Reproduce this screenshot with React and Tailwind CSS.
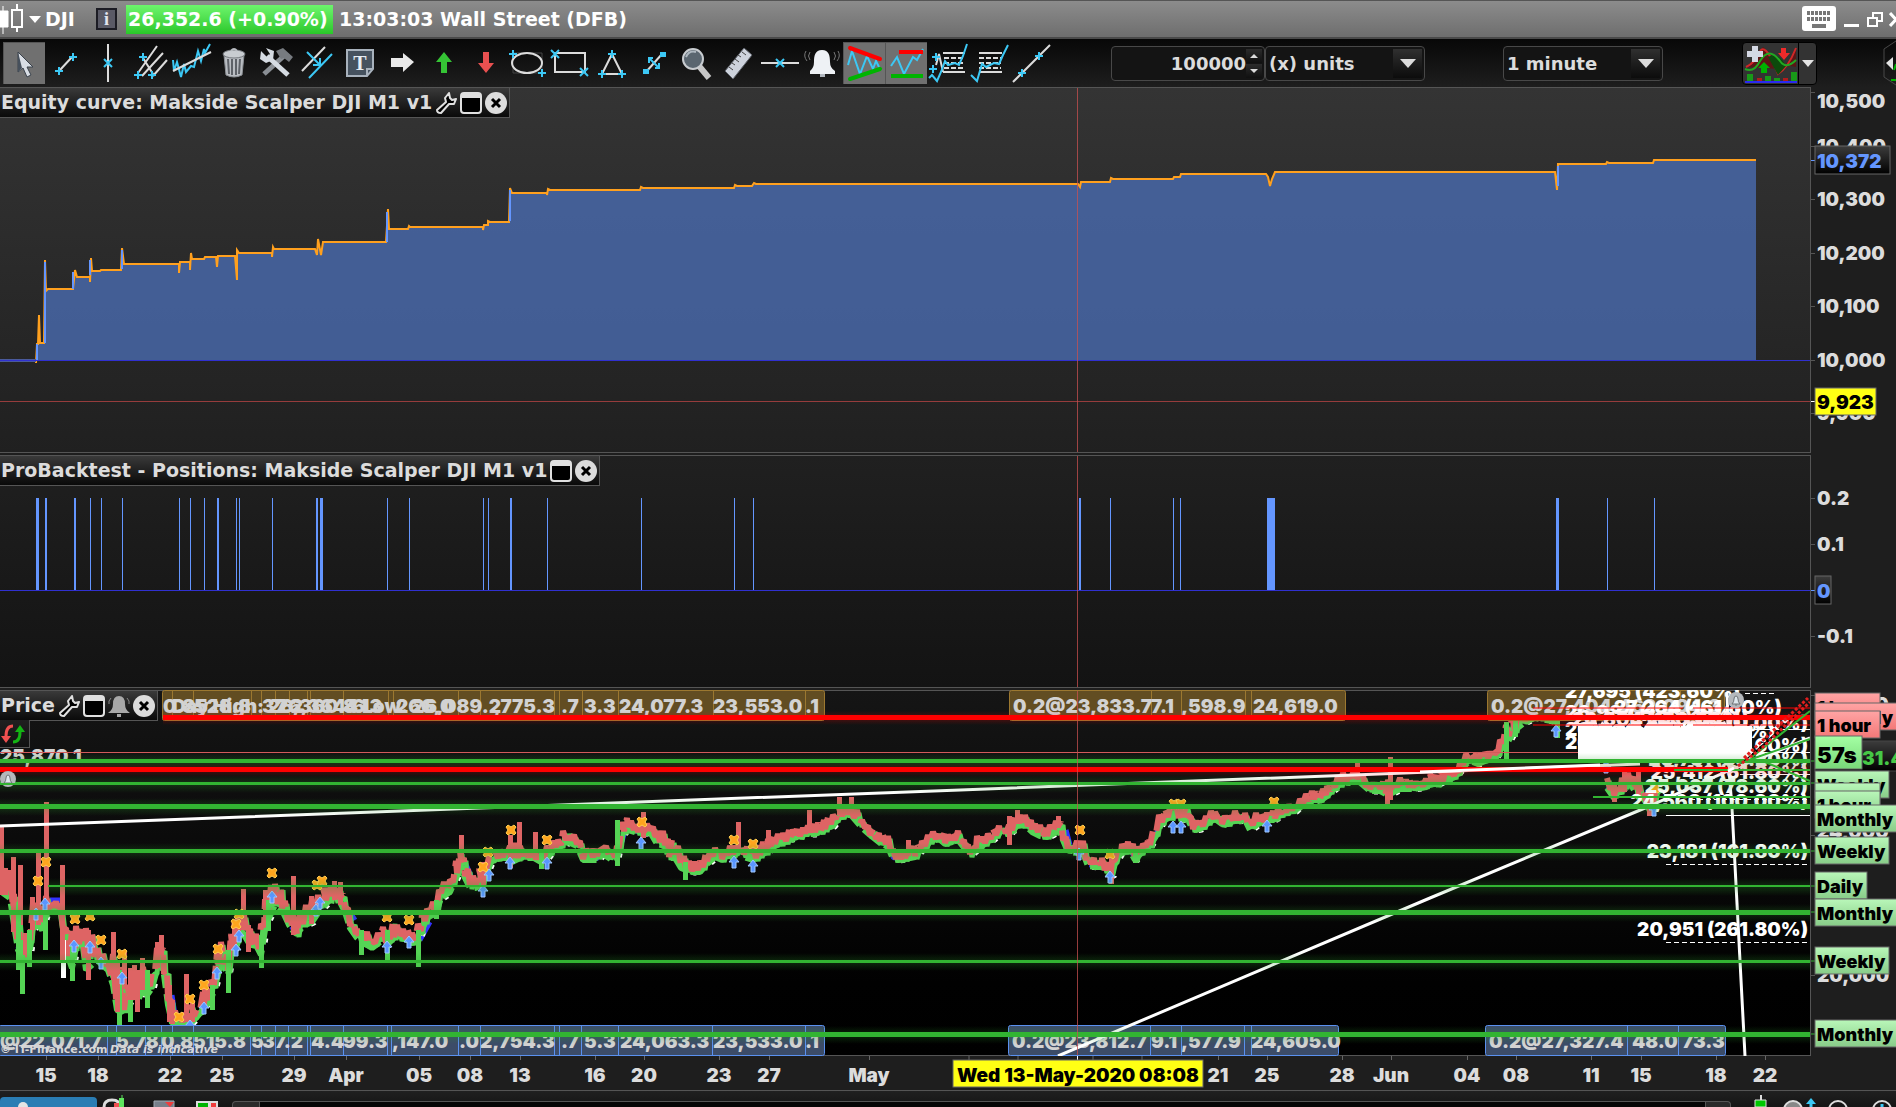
import { Fragment } from "react";

const UI_FONT = "font-['DejaVu_Sans',sans-serif] font-bold";
const CHART_FONT = "font-['Inter',sans-serif] font-black";

// equity line, x / y
const equity = [
  [0, 360], [36, 360], [36, 363], [37, 344], [38, 344], [39, 315], [40, 343], [44, 343], [45, 260], [46, 291], [48, 289],
  [73, 289], [75, 270], [77, 277], [90, 277], [90, 282], [91, 258], [92, 271], [100, 271], [101, 270], [121, 270],
  [122, 248], [124, 264], [179, 264], [179, 273], [180, 262], [190, 262], [190, 270], [191, 253], [192, 259],
  [204, 259], [205, 257], [216, 257], [217, 267], [218, 256], [235, 256], [237, 280], [237, 250], [239, 253],
  [272, 253], [272, 257], [273, 247], [274, 249], [315, 249], [317, 255], [318, 239], [321, 255], [323, 242],
  [386, 242], [388, 209], [389, 229], [408, 229], [409, 226], [410, 227], [483, 227], [483, 230], [484, 225],
  [488, 225], [488, 221], [490, 222], [509, 222], [510, 188], [512, 193], [547, 193], [547, 195], [548, 189], [550, 190],
  [640, 190], [641, 187], [643, 188], [734, 188], [735, 185], [737, 186], [752, 186], [754, 183], [756, 184],
  [1078, 184], [1080, 187], [1081, 182], [1110, 182], [1111, 178], [1113, 179], [1173, 179], [1174, 177],
  [1180, 177], [1181, 174], [1266, 174], [1268, 177], [1270, 186], [1272, 179], [1275, 172], [1555, 172],
  [1557, 190], [1558, 164], [1560, 164], [1606, 164], [1607, 162], [1609, 163], [1653, 163], [1654, 160], [1756, 160],
];

const positions = [
  [37, 3], [46, 2], [75, 2], [90, 1], [101, 1], [122, 1], [179, 1], [190, 1], [204, 1], [218, 2], [236, 1], [239, 1],
  [272, 1], [317, 2], [321, 3], [387, 1], [409, 1], [483, 1], [488, 1], [511, 2], [547, 1], [641, 1], [734, 1],
  [753, 1], [1080, 2], [1110, 1], [1173, 1], [1180, 1], [1271, 8], [1557, 3], [1607, 1], [1654, 1],
];

// price envelope: x, high, low
const price = [
  [0, 866, 888], [3, 868, 893], [10, 872, 898], [14, 885, 925], [18, 910, 950], [22, 930, 958], [27, 935, 960], [30, 915, 950],
  [33, 900, 928], [38, 900, 925], [42, 905, 930], [46, 895, 915], [50, 902, 908], [60, 903, 908], [66, 925, 950], [72, 930, 968],
  [76, 926, 948], [82, 930, 940], [86, 922, 970], [92, 928, 965], [97, 945, 960], [102, 952, 965], [108, 962, 970],
  [113, 955, 985], [117, 975, 1010], [121, 955, 1012], [127, 985, 1008], [132, 970, 995], [138, 968, 1000], [143, 960, 990],
  [147, 975, 995], [152, 972, 988], [157, 945, 970], [160, 937, 958], [164, 948, 975], [168, 970, 1005], [172, 1005, 1023],
  [182, 1018, 1023], [191, 1005, 1023], [197, 1008, 1017], [204, 988, 1008], [211, 980, 1000], [218, 948, 975],
  [221, 940, 960], [228, 955, 975], [232, 922, 952], [237, 908, 945], [241, 908, 930], [250, 925, 945], [256, 932, 945],
  [261, 925, 955], [265, 895, 930], [268, 885, 920], [275, 882, 905], [282, 888, 910], [289, 910, 925], [294, 915, 932],
  [297, 915, 934], [303, 908, 926], [312, 898, 922], [320, 888, 910], [330, 884, 900], [340, 884, 902], [345, 895, 912],
  [350, 917, 928], [357, 928, 938], [361, 928, 942], [367, 932, 945], [372, 940, 948], [380, 928, 942], [387, 925, 945],
  [394, 920, 938], [400, 928, 938], [408, 928, 940], [412, 932, 943], [418, 922, 942], [422, 910, 930], [427, 907, 918],
  [436, 900, 913], [441, 880, 898], [450, 878, 892], [457, 858, 876], [461, 848, 866], [465, 855, 878], [470, 877, 888],
  [476, 870, 888], [482, 865, 882], [486, 857, 874], [492, 852, 860], [500, 849, 858], [507, 844, 858], [512, 840, 862],
  [520, 845, 858], [525, 850, 857], [532, 850, 857], [541, 850, 862], [547, 846, 858], [553, 840, 850], [558, 840, 847],
  [563, 832, 846], [568, 832, 842], [577, 835, 846], [583, 846, 860], [590, 847, 860], [597, 846, 860], [603, 844, 854],
  [612, 849, 860], [617, 845, 858], [619, 822, 848], [624, 820, 832], [628, 818, 830], [635, 822, 832], [641, 822, 834],
  [650, 824, 832], [657, 830, 844], [665, 832, 846], [669, 838, 858], [675, 842, 858], [681, 850, 868], [686, 860, 870],
  [692, 862, 872], [700, 858, 872], [707, 852, 864], [715, 848, 857], [722, 850, 860], [730, 846, 857], [738, 844, 852],
  [744, 846, 857], [753, 847, 860], [760, 844, 856], [768, 838, 851], [775, 835, 846], [783, 832, 842], [790, 829, 839],
  [797, 828, 837], [805, 827, 834], [815, 824, 834], [825, 819, 829], [833, 814, 826], [839, 808, 818], [845, 807, 815],
  [851, 807, 815], [857, 810, 822], [862, 820, 828], [870, 827, 835], [880, 834, 843], [888, 836, 847], [893, 849, 859],
  [898, 850, 860], [905, 850, 859], [915, 847, 857], [922, 840, 849], [930, 832, 842], [938, 830, 838], [945, 834, 844],
  [952, 832, 842], [958, 832, 840], [965, 840, 849], [970, 847, 855], [977, 837, 849], [985, 834, 844], [993, 830, 839],
  [1000, 826, 832], [1009, 824, 834], [1017, 813, 826], [1025, 814, 825], [1032, 822, 832], [1040, 824, 836], [1047, 828, 837],
  [1053, 822, 834], [1058, 820, 828], [1063, 824, 840], [1068, 842, 852], [1077, 840, 853], [1083, 840, 853], [1088, 856, 866],
  [1095, 857, 867], [1102, 857, 867], [1108, 862, 874], [1112, 856, 876], [1115, 847, 863], [1122, 845, 851], [1130, 842, 851],
  [1135, 847, 860], [1143, 842, 851], [1150, 837, 846], [1156, 822, 836], [1162, 810, 822], [1170, 805, 817], [1180, 805, 819],
  [1188, 807, 820], [1193, 820, 830], [1200, 822, 829], [1208, 814, 823], [1215, 810, 819], [1222, 814, 824], [1230, 816, 824],
  [1235, 812, 821], [1245, 812, 820], [1250, 820, 830], [1258, 812, 824], [1267, 813, 821], [1275, 810, 819], [1283, 807, 813],
  [1295, 803, 811], [1300, 799, 806], [1309, 792, 802], [1314, 790, 799], [1320, 792, 801], [1327, 786, 796], [1332, 782, 791],
  [1340, 774, 784], [1350, 774, 782], [1357, 772, 780], [1363, 775, 785], [1370, 783, 791], [1380, 783, 791], [1388, 778, 795],
  [1400, 778, 789], [1410, 781, 789], [1420, 781, 788], [1430, 775, 786], [1437, 773, 784], [1445, 771, 781], [1455, 769, 777],
  [1463, 755, 767], [1470, 754, 761], [1478, 755, 764], [1485, 751, 761], [1495, 752, 758], [1500, 740, 750], [1506, 725, 745],
  [1515, 712, 730], [1525, 703, 722], [1535, 702, 718], [1557, 702, 722],
];
const priceEnd = [
  [1607, 776, 788], [1614, 788, 798], [1622, 778, 789], [1630, 772, 783], [1638, 782, 797], [1644, 790, 799],
  [1650, 792, 811], [1656, 788, 797], [1662, 775, 789],
];

// x, y1, y2, colour index (0 red, 1 green, 2 white)
const spikes = [
  [1, 825, 895, 0], [5, 868, 895, 0], [9, 870, 890, 0], [13, 857, 932, 0], [20, 865, 925, 0], [18, 910, 970, 1],
  [22, 940, 994, 1], [25, 933, 955, 0], [29, 930, 967, 1], [32, 897, 930, 0],
  [38, 853, 925, 0], [45, 915, 950, 1], [46, 802, 910, 0], [63, 940, 978, 2], [62, 865, 960, 0], [72, 945, 981, 1],
  [88, 930, 980, 0], [113, 932, 980, 0], [119, 970, 1025, 1], [117, 960, 1012, 0], [124, 950, 985, 0], [130, 985, 1022, 1],
  [130, 968, 1000, 0], [134, 965, 1000, 0], [137, 970, 1012, 0], [142, 958, 990, 0], [147, 970, 1008, 1],
  [157, 942, 968, 0], [161, 935, 955, 0], [169, 985, 1022, 0], [172, 1000, 1024, 0], [192, 1000, 1022, 0],
  [186, 974, 1022, 0], [204, 985, 1005, 0], [212, 985, 1010, 1], [228, 950, 993, 1], [234, 920, 948, 0], [243, 889, 930, 0],
  [248, 925, 952, 0], [261, 935, 968, 1], [265, 890, 925, 0], [268, 900, 931, 1], [293, 876, 935, 0], [311, 896, 924, 0],
  [334, 881, 900, 0], [340, 882, 905, 0], [361, 930, 955, 1], [387, 930, 960, 1], [418, 930, 967, 1], [436, 900, 919, 1],
  [461, 835, 860, 0], [483, 862, 885, 0], [510, 835, 868, 0], [519, 822, 855, 0], [535, 832, 860, 0], [541, 852, 869, 1],
  [617, 820, 866, 1], [643, 812, 838, 0], [685, 862, 880, 1], [738, 822, 850, 0], [768, 830, 848, 0], [809, 810, 832, 0],
  [839, 797, 815, 0], [851, 797, 815, 0], [908, 840, 856, 0], [1009, 816, 845, 0], [1058, 816, 828, 0], [1111, 852, 884, 0],
  [1017, 810, 820, 0], [1357, 763, 780, 0], [1390, 757, 800, 0], [1387, 785, 809, 0], [1135, 850, 863, 1], [1506, 722, 759, 1],
  [1557, 705, 738, 1], [1515, 715, 737, 1], [1649, 795, 816, 0], [1614, 785, 802, 0], [1624, 770, 792, 0], [1638, 772, 796, 0],
];
const spikeColors = ["#de6464", "#55d455", "#ffffff"];

const crosses = [
  [38, 881], [46, 862], [75, 919], [90, 916], [101, 940], [122, 954], [179, 1017], [190, 999], [204, 985], [218, 949],
  [236, 924], [239, 914], [272, 873], [317, 885], [322, 881], [387, 917], [409, 920], [483, 867], [488, 852], [511, 830],
  [547, 840], [642, 822], [734, 840], [753, 844], [1080, 830], [1110, 854], [1174, 804], [1181, 804], [1274, 802], [1655, 788],
];
const arrows = [
  [36, 914], [45, 904], [74, 946], [90, 947], [101, 963], [122, 978], [190, 1026], [204, 1008], [217, 973], [236, 950],
  [239, 936], [272, 897], [316, 910], [320, 903], [387, 947], [409, 942], [483, 891], [489, 875], [510, 863], [547, 863],
  [641, 843], [734, 862], [753, 866], [1079, 854], [1110, 877], [1173, 827], [1181, 827], [1267, 826], [1556, 731],
  [1606, 767], [1654, 810],
];

const greenLines = [
  [0, 761, 4], [0, 783, 3], [0, 806, 5], [0, 851, 4], [48, 886, 2], [0, 912, 5], [0, 961, 3], [0, 1034, 5],
];

const topSplits = [172, 193, 251, 261, 275, 289, 307, 310, 343, 388, 393, 458, 480, 554, 559, 582, 618, 713, 805];
const botSplits = [107, 116, 145, 161, 172, 193, 250, 261, 275, 288, 307, 310, 343, 387, 391, 458, 480, 554, 559, 581, 618, 712, 805];

const topTexts = [
  [163, "0.85"], [172, "Day High: 26,360.4"], [194, "528.8"], [262, "37.2"], [276, "26,364.6"], [343, "8.13"],
  [362, "Low: 26,089.2"], [396, "266,0"], [494, ",775.3"], [561, ".7"], [584, "3.3"], [619, "24,077.3"], [713, "23,553.0"], [805, ".1"],
  [1013, "0.2@23,833.7"], [1151, "7.1"], [1181, ",598.9"], [1253, "24,619.0"], [1491, "0.2@27,404.4"], [1631, "62,094.3"],
];
const botTexts = [
  [0, "@22,071.7"], [116, "5.78"], [161, "0.8"], [193, "515.8"], [251, "5"], [262, "37.2"], [311, "4.4"], [343, "99.3"],
  [392, ",147.0"], [459, ".0"], [480, "2,754.3"], [561, ".7"], [584, "5.3"], [620, "24,063.3"], [713, "23,533.0"],
  [805, ".1"], [1012, "0.2@23,812.7"], [1151, "9.1"], [1181, ",577.9"], [1251, "24,605.0"], [1489, "0.2@27,327.4"],
  [1632, "48.0"], [1682, "73.3"],
];

const dates = [
  [46, "15"], [98, "18"], [170, "22"], [222, "25"], [294, "29"], [346, "Apr"], [419, "05"], [470, "08"], [520, "13"],
  [595, "16"], [644, "20"], [719, "23"], [769, "27"], [869, "May"], [1218, "21"], [1267, "25"], [1342, "28"], [1391, "Jun"],
  [1467, "04"], [1516, "08"], [1591, "11"], [1641, "15"], [1716, "18"], [1765, "22"],
];

const toPoints = (list) => list.map((p) => p.join(",")).join(" ");

// small repeatable noise so the curve looks the same on every render
const noise = (n) => {
  const v = Math.sin(n * 12.9898) * 43758.5453;
  return v - Math.floor(v);
};

const zigzag = (env) => {
  const out = [];
  let up = true;
  for (let i = 0; i < env.length - 1; i++) {
    const [x1, t1, b1] = env[i];
    const [x2, t2, b2] = env[i + 1];
    for (let x = x1; x < x2; x += 3) {
      const k = (x - x1) / (x2 - x1);
      const top = t1 + (t2 - t1) * k;
      const bottom = b1 + (b2 - b1) * k;
      const gap = (bottom - top) * 0.3 * noise(x);
      out.push([x, Math.round(up ? top + gap - 1 : bottom - gap)]);
      up = !up;
    }
  }
  return out;
};

// the packed stack of labels under the last highs
const labelStack = () => {
  const top = [];
  const bottom = [];
  for (let x = 1578; x <= 1752; x += 3) {
    top.push([x, Math.round(720 + noise(x) * 8)]);
    bottom.unshift([x, Math.round(759 + noise(x + 1) * 4)]);
  }
  return [...top, ...bottom];
};

function PriceCurve({ env }) {
  const line = zigzag(env);
  const floor = env.map(([x, , b]) => [x, b - 1]);
  return (
    <g fill="none" strokeLinejoin="bevel">
      <polyline points={toPoints(floor)} stroke="#ffffff" strokeWidth="5" strokeDasharray="4 19" transform="translate(2 2)" />
      <polyline points={toPoints(floor)} stroke="#3232f0" strokeWidth="4" strokeDasharray="5 60" />
      <polyline points={toPoints(floor)} stroke="#55d455" strokeWidth="6" strokeDasharray="14 6 22 4" transform="translate(0 1)" />
      <polyline points={toPoints(line)} stroke="#55d455" strokeWidth="5" transform="translate(2 3)" />
      <polyline points={toPoints(line)} stroke="#de6464" strokeWidth="6" strokeDasharray="32 6 20 8" />
    </g>
  );
}

function Tool({ label, active, children }) {
  return (
    <button
      type="button"
      aria-label={label}
      className={`flex h-[42px] w-[42px] shrink-0 items-center justify-center ${active ? "border-l border-t border-[#555] bg-[#707070]" : ""}`}
    >
      <svg width="40" height="40" viewBox="0 0 40 40" fill="none" strokeWidth="2" stroke="#dcdcdc">
        {children}
      </svg>
    </button>
  );
}

const B = "#3cc8f5";
const plus = (x, y) => `M${x - 4} ${y}h8M${x} ${y - 4}v8`;
const ex = (x, y) => `M${x - 4} ${y - 4}l8 8M${x + 4} ${y - 4}l-8 8`;

function Toolbar() {
  return (
    <div className="flex h-12 shrink-0 items-center overflow-hidden bg-linear-to-b from-[#080808] to-[#1e1e1e] pl-[3px]">
      <Tool label="Pointer" active>
        <path d="M13 8v20l5-4 4 9 4-2-4-8h6z" fill="#d8dde4" stroke="#3a424c" strokeWidth="1" />
        <path d="M13 8v20l4-4z" fill="#46505c" stroke="none" />
      </Tool>
      <Tool label="Segment">
        <path d="M14 27L26 14" />
        <path stroke={B} d={plus(13, 28) + plus(27, 14)} />
      </Tool>
      <Tool label="Vertical line">
        <path d="M20 1v38" />
        <path stroke={B} d={ex(20, 20)} />
      </Tool>
      <Tool label="Pitchfork">
        <path d="M8 30L27 3M12 33L33 10M23 33L37 17M13 15L23 31" />
        <path stroke={B} d={plus(13, 14) + plus(8, 32) + plus(22, 32)} />
      </Tool>
      <Tool label="Regression">
        <path stroke={B} d="M1 17l1 11 3-9 4 15 3-13 2 8 5-6 3 1 4-16 3 10 3-12 1 4 5-9" />
        <path d="M1 28L39 9" />
      </Tool>
      <Tool label="Delete">
        <path d="M10 12h20l-2 20q-8 4-16 0z" fill="#b9bdc2" stroke="#8d9196" strokeWidth="1" />
        <path d="M14 16l1 15M18 16v16M22 16v16M26 16l-1 15" stroke="#5e6268" />
        <ellipse cx="20" cy="11" rx="11" ry="4" fill="#c9cdd1" stroke="#777b80" strokeWidth="1" />
        <path d="M17 8q3-4 6 0" stroke="#b9bdc2" />
      </Tool>
      <Tool label="Settings">
        <path d="M29 12L8 31" stroke="#8a8f95" strokeWidth="5" />
        <path d="M20 8l7-3 10 9-4 5-5-4-3 1z" fill="#777b80" stroke="none" />
        <path d="M11 13L32 32" stroke="#d5dbe2" strokeWidth="5" />
        <path d="M5 8l6 6 3-3-4-6 8 3-1 9-7 3-6-4z" fill="#d5dbe2" stroke="none" />
      </Tool>
      <Tool label="Parallel lines">
        <path d="M4 28L27 4" />
        <path stroke={B} d="M11 35L34 11M9 9l13 13M22 15v7h-7" />
      </Tool>
      <Tool label="Text">
        <path d="M7 7h26v19l-6 7H7z" fill="#46525f" stroke="#a8b2bd" strokeWidth="2" />
        <path d="M33 26h-6v7" stroke="#a8b2bd" />
        <text x="20" y="27" textAnchor="middle" fill="#e6edf4" stroke="none" className="font-['Liberation_Serif',serif] text-xl font-bold">T</text>
      </Tool>
      <Tool label="Right arrow">
        <path d="M9 15h12V10l11 9-11 10v-5H9z" fill="#e8e8e8" stroke="none" />
      </Tool>
      <Tool label="Up arrow">
        <path d="M20 9l8 10h-5v11h-6V19h-5z" fill="#35c435" stroke="none" />
      </Tool>
      <Tool label="Down arrow">
        <path d="M20 30l8-10h-5V9h-6v11h-5z" fill="#e85050" stroke="none" />
      </Tool>
      <Tool label="Ellipse">
        <path d="M5 10h29v20H5z" stroke="#444" strokeWidth="1" />
        <ellipse cx="19" cy="20" rx="15" ry="10" />
        <path stroke={B} d={plus(5, 11) + plus(34, 30)} />
      </Tool>
      <Tool label="Rectangle">
        <path d="M5 10h30v19H5z" />
        <path stroke={B} d={ex(5, 11) + ex(34, 29)} />
      </Tool>
      <Tool label="Triangle">
        <path d="M20 11L10 31h20z" />
        <path stroke={B} d={plus(20, 11) + plus(10, 31) + plus(30, 31)} />
      </Tool>
      <Tool label="Measure">
        <path d="M12 29L28 11" />
        <path stroke={B} d="M15 15l10 10M15 20v-5h4M25 20v5h-4" />
        <path fill={B} stroke="none" d="M9 26h6v5H9zM26 9h6v5h-6z" />
      </Tool>
      <Tool label="Zoom">
        <path d="M23 23l10 12" stroke="#c8c8c8" strokeWidth="6" />
        <circle cx="17" cy="16" r="10" fill="#5a6670" stroke="#c8ccd0" strokeWidth="2" />
        <path d="M10 14q3-7 10-5" stroke="#aeb8c0" />
      </Tool>
      <Tool label="Ruler">
        <path d="M7 28L26 5l8 7-19 24z" fill="#cdd2dc" stroke="#5c6068" strokeWidth="1" />
        <path d="M11 24l4 3M14 20l3 2M17 16l4 3M20 12l3 2M24 9l4 3" stroke="#444" strokeWidth="1" />
      </Tool>
      <Tool label="Horizontal line">
        <path d="M1 20h38" />
        <path stroke={B} d={ex(20, 20)} />
      </Tool>
      <Tool label="Alert">
        <path d="M20 7c7 0 8 6 8 12q0 6 5 9v3H8v-3q4-3 4-9c0-6 1-12 8-12z" fill="#eef1f5" stroke="none" />
        <path d="M18 31h5v3h-5z" fill="#b0b6be" stroke="none" />
        <path d="M8 9q-3 4 0 8M4 8q-3 5 1 10M32 9q3 4 0 8M36 8q3 5-1 10" stroke="#777" strokeWidth="1" />
      </Tool>
      <Tool label="Auto trend lines" active>
        <path stroke={B} d="M3 21l4-14 8 23 7-18 6 13 3-8 3 6" />
        <path d="M5 4l30 11" stroke="#f00" strokeWidth="4" strokeLinecap="round" />
        <path d="M5 35l30-10" stroke="#00b400" strokeWidth="4" strokeLinecap="round" />
      </Tool>
      <Tool label="Auto support" active>
        <path stroke={B} d="M4 22l6-9 7 17 9-17 4 3 6-11" />
        <path d="M12 8h24" stroke="#f00" strokeWidth="4" />
        <path d="M4 32h32" stroke="#00b400" strokeWidth="4" />
      </Tool>
      <Tool label="Pattern box">
        <path d="M15 10h22M15 29h22M8 22l3-11 4 18" />
        <path d="M16 15h21M16 20h21M16 25h21" strokeDasharray="5 2" />
        <path stroke={B} d={`M1 35l3-3 5 6 4-9 4-11 3 4 7-2 4 2 4-9 4-12${plus(8, 14)}${plus(5, 26)}`} />
      </Tool>
      <Tool label="Pattern search">
        <path d="M9 10h23M9 29h23" />
        <path d="M9 15h22M9 20h22M9 25h22" strokeDasharray="5 2" />
        <path stroke={B} d="M1 32l6 6 5-17 4 3 8-4 5 1 4-9 5-10" />
      </Tool>
      <Tool label="Line">
        <path d="M1 39L38 2" />
        <path stroke={B} d={plus(10, 30) + plus(27, 13)} />
      </Tool>

      <div className="ml-[58px] flex h-[35px] w-[154px] shrink-0 items-center rounded-sm border border-[#484848] bg-[#141414] pr-[2px]">
        <input
          aria-label="Quantity"
          defaultValue="100000"
          className={`${UI_FONT} w-0 min-w-0 flex-1 bg-transparent text-right text-[18px] text-[#dcdcdc] outline-none`}
        />
        <div className="flex h-[29px] w-[16px] flex-col justify-between">
          <button type="button" aria-label="Increase" className="flex h-[14px] items-center justify-center bg-linear-to-b from-[#2c2c2c] to-[#101010]">
            <svg width="8" height="4" viewBox="0 0 8 4"><path d="M0 4l4-4 4 4z" fill="#ddd" /></svg>
          </button>
          <button type="button" aria-label="Decrease" className="flex h-[14px] items-center justify-center bg-linear-to-b from-[#2c2c2c] to-[#101010]">
            <svg width="8" height="4" viewBox="0 0 8 4"><path d="M0 0l4 4 4-4z" fill="#ddd" /></svg>
          </button>
        </div>
      </div>
      <Dropdown label="Unit" value="(x) units" />
      <div className="w-[78px] shrink-0" />
      <Dropdown label="Timeframe" value="1 minute" />

      <div className="ml-auto mr-[66px] flex h-[43px] w-[75px] shrink-0 overflow-hidden rounded-sm border border-black bg-[#333]">
        <button type="button" aria-label="Add indicator" className="w-[55px]">
          <svg width="55" height="41" viewBox="0 0 55 41" fill="none">
            <path d="M3 24Q15 15 20 4q6 4 14 27 10-8 19-26v19q-8-3-14 2z" fill="#5c1616" />
            <path d="M3 24Q12 20 18 7q6-5 17 24 10-6 18-26" stroke="#d02828" strokeWidth="2" />
            <path d="M25 14q10-6 18 9l-8 9z" fill="#0c4a0c" />
            <path d="M2 26q9 4 15-8 9-15 20 0 6 9 16-1" stroke="#22a822" strokeWidth="2" />
            <path d="M9 3h6v5h5v6h-5v5H9v-5H4V8h5z" fill="#d4d8e4" />
            <path d="M38 5h5v5h4l-6 7-6-7h3z" fill="#f02a2a" />
            <path d="M21 19l6 6h-3v5h-6v-5h-3z" fill="#00b400" />
            <path d="M4 31h6v7H4zM22 33h6v5h-6zM31 35h6v3h-6zM48 29h6v9h-6z" fill="#189a18" />
            <path d="M14 35h5v3h-5zM40 35h5v3h-5z" fill="#b01c1c" />
            <path d="M2 39h52" stroke="#2a2af0" strokeWidth="2" />
          </svg>
        </button>
        <button type="button" aria-label="Indicator list" className="flex flex-1 items-center justify-center border-l border-black">
          <svg width="12" height="7" viewBox="0 0 12 7"><path d="M0 0h12L6 7z" fill="#e4e4e4" /></svg>
        </button>
      </div>
      <button type="button" aria-label="More" className="h-[46px] w-[13px] shrink-0">
        <svg width="13" height="46" viewBox="0 0 13 46" fill="none">
          <path d="M13 1L1 9v28l12 8" stroke="#484848" strokeWidth="1" />
          <path d="M10 17v13l-7-7z" fill="#e4e4e4" />
          <path d="M11 30l2-6M8 40h5" stroke="#00b400" strokeWidth="2" />
        </svg>
      </button>
    </div>
  );
}

function Dropdown({ label, value }) {
  return (
    <div className="relative h-[35px] w-[160px] shrink-0">
      <select
        aria-label={label}
        className={`${UI_FONT} h-full w-full appearance-none rounded-sm border border-[#484848] bg-[#141414] pl-[3px] text-[18px] text-[#dcdcdc]`}
      >
        <option>{value}</option>
      </select>
      <span className="pointer-events-none absolute right-[3px] top-[3px] flex h-[29px] w-[29px] items-center justify-center bg-linear-to-b from-[#303030] to-[#0c0c0c]">
        <svg width="16" height="9" viewBox="0 0 16 9"><path d="M0 0h16L8 9z" fill="#dcdcdc" /></svg>
      </span>
    </div>
  );
}

function TitleBar() {
  return (
    <header className={`${UI_FONT} flex h-[39px] shrink-0 items-center overflow-hidden whitespace-nowrap border-b-2 border-t border-b-[#4a4a4a] border-t-[#555] bg-linear-to-b from-[#8c8c8c] to-[#6e6e6e] text-[19px] text-white`}>
      <svg width="24" height="30" viewBox="0 0 24 30" className="shrink-0">
        <path d="M3 1v28M0 6h8v16H0z" transform="translate(0 1)" fill="#fff" stroke="#fff" />
        <path d="M17 0v6M17 23v5M12 6h10v17H12z" fill="none" stroke="#fff" strokeWidth="2" />
      </svg>
      <button type="button" aria-label="Instrument menu" className="ml-[5px] shrink-0">
        <svg width="12" height="7" viewBox="0 0 12 7"><path d="M0 0h12L6 7z" fill="#fff" /></svg>
      </button>
      <h1 className="ml-[4px] w-[37px]">DJI</h1>
      <button type="button" aria-label="Information" className="ml-[14px] flex h-[22px] w-[21px] items-center justify-center border-2 border-[#1c1c24] bg-[#5a5a66] font-['Liberation_Serif',serif] text-[18px] leading-none text-[#e4e4ee]">
        i
      </button>
      <span className="ml-[9px] flex h-[29px] w-[207px] items-center bg-linear-to-b from-[#6cf56c] to-[#28c828] pl-[2px]">26,352.6 (+0.90%)</span>
      <time className="ml-[6px] w-[101px]">13:03:03</time>
      <span>Wall Street (DFB)</span>
      <div className="-mr-[6px] ml-auto flex items-center">
        <button type="button" aria-label="Keyboard">
          <svg width="34" height="26" viewBox="0 0 34 26">
            <rect width="34" height="25" rx="3" fill="#fff" />
            <path d="M5 7h24M5 13h24" stroke="#777" strokeWidth="4" strokeDasharray="3 1" />
            <path d="M10 20h14" stroke="#777" strokeWidth="4" />
          </svg>
        </button>
        <button type="button" aria-label="Minimize" className="ml-[8px] mt-[12px] h-[3px] w-[15px] bg-white" />
        <button type="button" aria-label="Restore" className="ml-[8px]">
          <svg width="16" height="17" viewBox="0 0 16 17" fill="none" stroke="#fff" strokeWidth="2">
            <path d="M6 6V2h9v8h-4M1 7h9v8H1z" />
          </svg>
        </button>
        <button type="button" aria-label="Close" className="ml-[6px]">
          <svg width="13" height="15" viewBox="0 0 13 15" stroke="#fff" strokeWidth="3"><path d="M1 1l12 13M13 1L1 14" /></svg>
        </button>
      </div>
    </header>
  );
}

function PanelHeader({ title, wrench, bell }) {
  return (
    <div className={`${UI_FONT} absolute left-0 top-0 flex h-[31px] items-center gap-[3px] whitespace-nowrap border-b border-r border-t border-[#555] bg-linear-to-b from-[#3a3a3a] to-[#0a0a0a] pl-[1px] pr-[2px] text-[19px] text-[#dcdcdc]`}>
      <h2>{title}</h2>
      {wrench && (
        <button type="button" aria-label="Settings">
          <svg width="22" height="22" viewBox="0 0 22 22">
            <path d="M14 1l-4 5 1 4-9 8q0 3 4 3l8-9 5 0 2-5-4 1-2-2z" fill="#000" stroke="#e0e0e0" strokeWidth="2" strokeLinejoin="round" />
          </svg>
        </button>
      )}
      <button type="button" aria-label="Maximize" className="h-[22px] w-[22px] rounded-sm border-2 border-t-[6px] border-[#e0e0e0] bg-black" />
      {bell && (
        <button type="button" aria-label="Alerts">
          <svg width="22" height="22" viewBox="0 0 22 22">
            <path d="M11 1q6 0 6 8 0 6 5 9H0q5-3 5-9 0-8 6-8zM9 19h4v3H9z" fill="#a8a8a8" />
            <path d="M3 3Q0 6 1 9M19 3q3 3 2 6" fill="none" stroke="#888" />
          </svg>
        </button>
      )}
      <button type="button" aria-label="Close">
        <svg width="22" height="22" viewBox="0 0 22 22">
          <circle cx="11" cy="11" r="11" fill="#dcdcdc" />
          <path d="M7 7l8 8M15 7l-8 8" stroke="#000" strokeWidth="3" />
        </svg>
      </button>
    </div>
  );
}

function AxisTag({ y, w, h = 27, text, tone, size = "text-[18px]", x = 4 }) {
  const fills = { green: "url(#tagGreen)", mint: "url(#tagMint)", pink: "url(#tagPink)", yellow: "#ffff14", dark: "url(#tagDark)" };
  return (
    <g>
      <rect x={x} y={y} width={w} height={h} fill={fills[tone]} stroke="#666" />
      <text x={x + 2} y={y + h - 6} fill={tone === "dark" ? "#6496ff" : "#000"} className={size}>{text}</text>
    </g>
  );
}

function Axis({ top, height, ticks, children }) {
  return (
    <svg className={`${CHART_FONT} w-[85px] shrink-0 bg-[#1e1e1e] text-[19px]`} viewBox={`0 ${top} 85 ${height}`} preserveAspectRatio="none">
      <defs>
        <linearGradient id="tagGreen" x2="0" y2="1"><stop stopColor="#b9f7b9" /><stop offset="1" stopColor="#88cc88" /></linearGradient>
        <linearGradient id="tagMint" x2="0" y2="1"><stop stopColor="#a4ffa4" /><stop offset="1" stopColor="#78d878" /></linearGradient>
        <linearGradient id="tagPink" x2="0" y2="1"><stop stopColor="#ffa4a4" /><stop offset="1" stopColor="#f47878" /></linearGradient>
        <linearGradient id="tagDark" x2="0" y2="1"><stop stopColor="#3c3c3c" /><stop offset="1" stopColor="#000" /></linearGradient>
      </defs>
      {ticks.map(([tick, base, text]) => (
        <Fragment key={text}>
          <rect x="0" y={tick} width="4" height="1" fill="#555" />
          <text x="6" y={base} fill="#dcdcdc">{text}</text>
        </Fragment>
      ))}
      {children}
    </svg>
  );
}

function EquityPanel() {
  return (
    <section className="relative flex min-h-0 flex-[366_1_0px]">
      <svg className="min-w-0 flex-1" viewBox="0 87 1811 366" preserveAspectRatio="none">
        <defs>
          <linearGradient id="bg1" x2="0" y2="1"><stop stopColor="#343434" /><stop offset="1" stopColor="#202020" /></linearGradient>
        </defs>
        <rect x="-1" y="87.5" width="1811.5" height="365" fill="url(#bg1)" stroke="#555" />
        <polygon points={`${toPoints(equity)} 1756,360`} fill="#4a6cb0" fillOpacity="0.8" />
        <polyline points={toPoints(equity.slice(1))} fill="none" stroke="#ffa01e" strokeWidth="2" />
        <path d="M37 360V344M45 343V262M73 289V272M90 275V260M122 269V250M387 242V212M510 221V190M1558 186V166" stroke="#6496ff" strokeWidth="2" />
        <rect y="359" width="36" height="3" fill="#4a5a9c" />
        <rect y="360" width="1810" height="1" fill="#3030d0" />
        <rect y="401" width="1810" height="1" fill="#963c3c" />
        <rect x="1077" y="88" width="1" height="364" fill="#c85050" fillOpacity="0.75" />
      </svg>
      <Axis
        top={87}
        height={366}
        ticks={[
          [92, 108, "10,500"], [146, 153, "10,400"], [199, 206, "10,300"], [253, 260, "10,200"], [306, 313, "10,100"],
          [360, 367, "10,000"], [413, 420, "9,900"],
        ]}
      >
        <rect y="160" width="4" height="1" fill="#6496ff" />
        <rect y="401" width="4" height="1" fill="#fff" />
        <AxisTag y={146} h={28} w={75} text="10,372" tone="dark" size="text-[19px]" />
        <AxisTag y={388} w={61} text="9,923" tone="yellow" size="text-[19px]" />
      </Axis>
      <PanelHeader title="Equity curve: Makside Scalper DJI M1 v1" wrench />
    </section>
  );
}

function PositionsPanel() {
  return (
    <section className="relative mt-[2px] flex min-h-0 flex-[233_1_0px]">
      <svg className="min-w-0 flex-1" viewBox="0 455 1811 233" preserveAspectRatio="none">
        <defs>
          <linearGradient id="bg2" x2="0" y2="1"><stop stopColor="#202020" /><stop offset="1" stopColor="#131313" /></linearGradient>
        </defs>
        <rect x="-1" y="455.5" width="1811.5" height="232" fill="url(#bg2)" stroke="#555" />
        {positions.map(([x, w]) => (
          <rect key={x} x={x - Math.floor(w / 2)} y="498" width={w} height="92" fill="#6496ff" />
        ))}
        <rect y="590" width="1810" height="1" fill="#3030d0" />
        <rect x="1077" y="456" width="1" height="231" fill="#c85050" fillOpacity="0.75" />
      </svg>
      <Axis top={455} height={233} ticks={[[498, 505, "0.2"], [544, 551, "0.1"], [636, 643, "-0.1"]]}>
        <rect y="590" width="4" height="1" fill="#6496ff" />
        <AxisTag y={576} h={28} w={16} text="0" tone="dark" size="text-[19px]" />
      </Axis>
      <PanelHeader title="ProBacktest - Positions: Makside Scalper DJI M1 v1" />
    </section>
  );
}

function OrderStrip({ x1, x2, y, h, splits, fill, stroke }) {
  return (
    <g fill="none" stroke={stroke}>
      <rect x={x1 + 0.5} y={y + 0.5} width={x2 - x1} height={h} rx="2" fill={fill} />
      {splits.map((s) => <path key={s} d={`M${s + 0.5} ${y}v${h}`} />)}
    </g>
  );
}

function BellDot({ x, y }) {
  return (
    <g transform={`translate(${x} ${y})`}>
      <circle r="8" fill="#b4b8bc" />
      <path d="M-4 4q2-2 2-5 0-3 2-3t2 3q0 3 2 5zM-1 5h2" fill="#dfe8ee" stroke="#6d7276" />
    </g>
  );
}

function PricePanel() {
  return (
    <section className="relative mt-[2px] flex min-h-0 flex-[366_1_0px]">
      <svg className={`${CHART_FONT} min-w-0 flex-1 text-[19px]`} viewBox="0 690 1811 366" preserveAspectRatio="none">
        <defs>
          <linearGradient id="bg3" x2="0" y2="1"><stop stopColor="#151515" /><stop offset="0.8" stopColor="#010101" /><stop offset="1" stopColor="#000" /></linearGradient>
          <linearGradient id="glow" x2="0" y2="1"><stop stopColor="#28a028" stopOpacity="0" /><stop offset="0.5" stopColor="#28a028" stopOpacity="0.25" /><stop offset="1" stopColor="#28a028" stopOpacity="0" /></linearGradient>
          <linearGradient id="glowRed" x2="0" y2="1"><stop stopColor="#f00" stopOpacity="0" /><stop offset="0.5" stopColor="#f00" stopOpacity="0.25" /><stop offset="1" stopColor="#f00" stopOpacity="0" /></linearGradient>
          <clipPath id="plot"><rect x="0" y="691" width="1810" height="334" /></clipPath>
        </defs>
        <rect x="-1" y="690.5" width="1811.5" height="365" fill="url(#bg3)" stroke="#555" />

        {/* price */}
        <g clipPath="url(#plot)">
          <path d="M50 900h12M172 995l3 20M350 912l5 8M420 940l10-18M622 842l3-12M1066 830l4 15M1155 838l6-16M465 862l6 14" stroke="#3232ff" strokeWidth="5" />
          <PriceCurve env={price} />
          <PriceCurve env={priceEnd} />
          {spikes.map(([x, y1, y2, c]) => (
            <rect key={`${x}-${y1}`} x={x - 2} y={y1} width="5" height={y2 - y1} fill={spikeColors[c]} />
          ))}
          {arrows.map(([x, y]) => (
            <path key={`${x}-${y}`} transform={`translate(${x} ${y})`} d="M0-6l5 6H2v6h-4V0h-3z" fill="#5a96ff" stroke="#a0c8ff" />
          ))}
          {crosses.map(([x, y]) => (
            <path key={`${x}-${y}`} transform={`translate(${x} ${y})`} d="M-3-5l3 2 3-2 2 2-2 3 2 3-2 2-3-2-3 2-2-2 2-3-2-3z" fill="#ffa51e" stroke="#ffcd50" />
          ))}
        </g>

        {/* orders */}
        <OrderStrip x1={162} x2={824} y={690} h={30} splits={topSplits} fill="#624d22" stroke="#9c7830" />
        <OrderStrip x1={1009} x2={1345} y={690} h={30} splits={[1151, 1181, 1245, 1251]} fill="#624d22" stroke="#9c7830" />
        <OrderStrip x1={1487} x2={1724} y={690} h={30} splits={[1629, 1680]} fill="#624d22" stroke="#9c7830" />
        <OrderStrip x1={-2} x2={824} y={1025} h={30} splits={botSplits} fill="#3c4c68" stroke="#5a91f0" />
        <OrderStrip x1={1008} x2={1338} y={1025} h={30} splits={[1150, 1181, 1244, 1251]} fill="#3c4c68" stroke="#5a91f0" />
        <OrderStrip x1={1485} x2={1725} y={1025} h={30} splits={[1627, 1678]} fill="#3c4c68" stroke="#5a91f0" />
        <g fill="#d2d2d2">
          {topTexts.map(([x, t]) => <text key={x} x={x} y="713">{t}</text>)}
          {botTexts.map(([x, t]) => <text key={x} x={x} y="1048">{t}</text>)}
          <text x="0" y="763">25,870.1</text>
        </g>
        <g fill="#d8d8d8" className="font-['DejaVu_Sans',sans-serif] text-[11px] font-bold">
          <text x="0" y="1053">© IT-Finance.com</text>
          <text x="110" y="1053" className="font-bold italic">Data is indicative</text>
        </g>

        {/* fibonacci labels */}
        <g fill="#fff">
          <text x="1565" y="698">27,695 (423.60%)</text>
          <text x="1614" y="714">27,264 (161.80%)</text>
          <text x="1565" y="719">26,984 (138.20%)</text>
          <text x="1572" y="726">26,804 (150.00%)</text>
          <text x="1565" y="736">26,</text>
          <text x="1565" y="749">26,</text>
          <g textAnchor="end">
            <text x="1808" y="730">26,598 (0.00%)</text>
            <text x="1775" y="738">26,344 (14.60%)</text>
            <text x="1808" y="752">26,092 (23.60%)</text>
            <text x="1808" y="766">25,751 (38.20%)</text>
            <text x="1808" y="779">25,412 (61.80%)</text>
            <text x="1808" y="793">25,037 (78.60%)</text>
            <text x="1808" y="808">24,560 (100.00%)</text>
            <text x="1808" y="858">23,181 (161.80%)</text>
            <text x="1808" y="936">20,951 (261.80%)</text>
          </g>
          <polygon points={toPoints(labelStack())} />
        </g>
        <path d="M1666 815h144M1726 729h84M1745 752h65M1740 774h70" stroke="#fff" strokeWidth="1" transform="translate(0 0.5)" />
        <path d="M1666 864h142M1666 942h142M1745 693h32M1690 799h118" stroke="#fff" strokeDasharray="5 3" transform="translate(0 0.5)" />

        {/* trend lines */}
        <g stroke="#fff" strokeWidth="3" fill="none">
          <path d="M0 826L480 808L960 790L1430 772L1640 764" />
          <path d="M1058 1056L1430 898L1645 808L1728 771L1810 738" />
          <path d="M1727 692L1729 770L1732 808L1745 1056" />
        </g>

        {/* support / resistance */}
        <rect y="752" width="1578" height="1" fill="#d25a5a" />
        {greenLines.map(([x, y, h]) => (
          <Fragment key={y}>
            <rect x={x} y={y - 8} width={1810 - x} height="18" fill="url(#glow)" />
            <rect x={x} y={y - Math.floor(h / 2)} width={1810 - x} height={h} fill="#32b432" />
          </Fragment>
        ))}
        {[717, 769].map((y) => (
          <Fragment key={y}>
            <rect x={y === 717 ? 163 : 0} y={y - 6} width="1810" height="14" fill="url(#glowRed)" />
            <rect x={y === 717 ? 163 : 0} y={y - 2} width={y === 717 ? 1647 : 1728} height="5" fill="#f00" />
          </Fragment>
        ))}
        <path d="M1533 708h277M1533 725h277" stroke="#f00" strokeDasharray="150 10" />
        <path d="M1593 797h217M1674 770h136M1740 763l70-24M1752 757l58-46M1765 762l45 19" stroke="#32b432" fill="none" strokeWidth="2" />
        <path d="M1738 766L1762 748L1810 702M1744 758L1808 698" stroke="#e01e1e" strokeWidth="3" strokeDasharray="3 2" />
        <path d="M1420 772L1600 765M1728 771l6-3" stroke="#fff" strokeWidth="3" />

        <BellDot x={1736} y={700} />
        <BellDot x={8} y={779} />
        <rect x="0" y="783" width="17" height="2" fill="#32b432" />
        <rect x="1077" y="691" width="1" height="364" fill="#c85050" fillOpacity="0.75" />
        <rect x="1810" y="690" width="1" height="366" fill="#555" />
      </svg>
      <Axis top={690} height={366} ticks={[[695, 711, "28,000"], [835, 838, "24,000"], [975, 982, "20,000"]]}>
        <path d="M0 761h4M0 783h4M0 851h4M0 886h4M0 912h4M0 961h4M0 1034h4" stroke="#32b432" strokeWidth="1" />
        <AxisTag y={693} w={65} text="1 hour" tone="pink" />
        <AxisTag y={703} w={88} text="Monthly" tone="pink" />
        <AxisTag y={711} w={65} text="1 hour" tone="pink" />
        <rect x="4" y="741" width="82" height="30" fill="url(#tagDark)" stroke="#444" />
        <text x="51" y="765" fill="#46c846" className="text-[19px]">31.4</text>
        <AxisTag y={736} w={47} h={33} text="57s" tone="mint" size="text-[22px]" />
        <AxisTag y={771} w={74} text="Weekly" tone="green" />
        <AxisTag y={783} w={65} text="" tone="green" />
        <AxisTag y={791} w={65} text="1 hour" tone="green" />
        <AxisTag y={805} w={88} text="Monthly" tone="green" />
        <AxisTag y={837} w={74} text="Weekly" tone="green" />
        <AxisTag y={872} w={52} text="Daily" tone="green" />
        <AxisTag y={899} w={88} text="Monthly" tone="green" />
        <AxisTag y={947} w={74} text="Weekly" tone="green" />
        <AxisTag y={1020} w={88} text="Monthly" tone="green" />
      </Axis>
      <PanelHeader title="Price" wrench bell />
      <button type="button" aria-label="Trade" className="absolute left-0 top-[30px] flex h-[28px] w-[30px] items-center border-b border-r border-[#555] bg-linear-to-b from-[#202020] to-[#111]">
        <svg width="26" height="20" viewBox="0 0 26 20" fill="none" strokeWidth="3">
          <path d="M13 2q-7 0-7 10" stroke="#f05050" />
          <path d="M1 12h10l-5 7z" fill="#f05050" />
          <path d="M13 18q7 0 7-10" stroke="#14b414" />
          <path d="M15 8h10l-5-7z" fill="#14b414" />
        </svg>
      </button>
    </section>
  );
}

function DateAxis() {
  return (
    <svg className={`${CHART_FONT} h-[34px] w-full shrink-0 bg-[#1e1e1e] text-[19px]`} viewBox="0 1056 1896 34" preserveAspectRatio="none">
      {dates.map(([x, t]) => (
        <Fragment key={x}>
          <rect x={x} y="1056" width="1" height="4" fill="#666" />
          <text x={x} y="1082" textAnchor="middle" fill="#dcdcdc">{t}</text>
        </Fragment>
      ))}
      <path d="M969 1056v4M1018 1056v4M1093 1056v4M1142 1056v4" stroke="#666" />
      <rect x="1077" y="1056" width="1" height="4" fill="#fff" />
      <rect x="953" y="1060" width="250" height="27" fill="#ffff14" stroke="#666" />
      <text x="1078" y="1082" textAnchor="middle" fill="#000">Wed 13-May-2020 08:08</text>
    </svg>
  );
}

function StatusBar() {
  return (
    <footer className="flex h-[17px] shrink-0 items-end overflow-hidden border-t border-[#555] bg-linear-to-b from-[#202020] to-[#151515]">
      <button type="button" aria-label="Account" className="flex h-[10px] w-[97px] items-end rounded-t-sm bg-[#2a7db4] pl-[18px]">
        <svg width="10" height="5" viewBox="0 0 10 5"><circle cx="5" cy="5" r="5" fill="#e4e4e4" /></svg>
      </button>
      <svg width="124" height="12" viewBox="0 0 124 12" fill="none" className="ml-[5px]">
        <path d="M2 12q0-7 8-7t8 7" stroke="#ddd" strokeWidth="3" />
        <path d="M12 8h5v4h-5z" fill="#f05050" />
        <path d="M20 0v12" stroke="#5ee65e" /><path d="M17 3h5v9h-5z" fill="#5ee65e" />
        <path d="M52 12V6h20v6" fill="#777f8a" stroke="#a0a8b0" /><path d="M63 7h9l-4 5z" fill="#f03c3c" />
        <path d="M94 6h22v6H94z" fill="#ddd" /><path d="M96 8h10v4H96z" fill="#00b400" /><path d="M109 8h5v4h-5z" fill="#f03c3c" />
      </svg>
      <div className="ml-[6px] h-[6px] w-[28px] rounded-tl-sm border border-b-0 border-[#555] bg-[#2a2a2a]" />
      <div className="h-[6px] flex-1 border-t border-[#555] bg-[#060606]" />
      <div className="h-[6px] w-[26px] rounded-tr-sm border border-b-0 border-[#555] bg-[#2a2a2a]" />
      <svg width="165" height="12" viewBox="0 0 165 12" fill="none">
        <path d="M30 0v5" stroke="#ddd" strokeWidth="2" /><path d="M24 5h11v7H24z" fill="#00c800" stroke="#ddd" />
        <circle cx="62" cy="15" r="9" fill="#888" stroke="#ddd" strokeWidth="2" />
        <path d="M75 9l5-6 5 6z" fill={B} /><path d="M80 6v6" stroke={B} strokeWidth="3" />
        <circle cx="107" cy="15" r="9" stroke="#ddd" strokeWidth="2" />
        <circle cx="151" cy="15" r="9" stroke="#ddd" strokeWidth="2" /><path d="M151 9v3" stroke={B} strokeWidth="3" />
      </svg>
    </footer>
  );
}

export default function App() {
  return (
    <div className="flex h-screen flex-col overflow-hidden bg-[#1e1e1e]">
      <TitleBar />
      <Toolbar />
      <main className="flex min-h-0 flex-1 flex-col">
        <EquityPanel />
        <PositionsPanel />
        <PricePanel />
      </main>
      <DateAxis />
      <StatusBar />
    </div>
  );
}
